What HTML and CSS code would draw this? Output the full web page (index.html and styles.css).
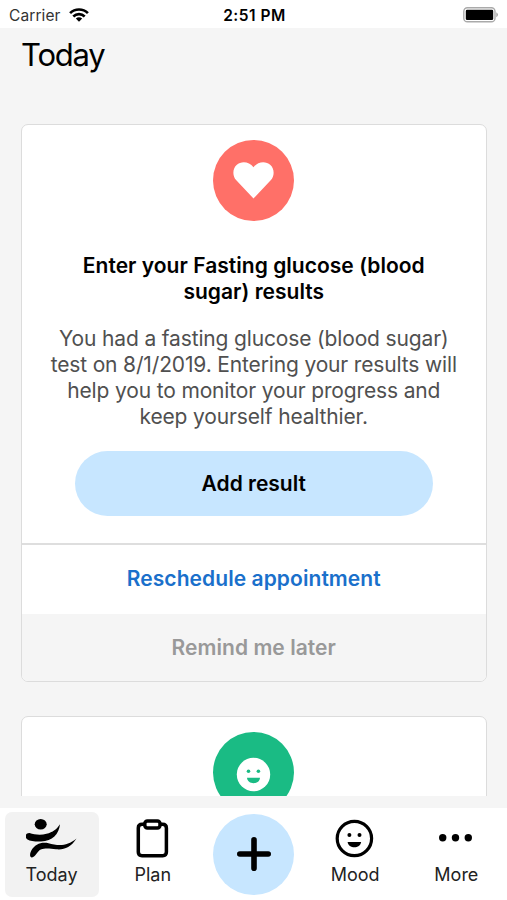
FILE: index.html
```html
<!DOCTYPE html>
<html lang="en">
<head>
<meta charset="utf-8">
<title>Today</title>
<link rel="stylesheet" href="styles.css">
</head>
<body>
<div class="app">
  <header class="status">
    <div class="carrier"><span>Carrier</span>
      <svg width="20" height="14" viewBox="0 0 20 14"><g fill="none" stroke="#000" stroke-width="2.7"><path d="M1.1 5.1C6 .3 14 .3 18.9 5.1"/><path d="M4.3 8.4C7.6 5.3 12.4 5.3 15.7 8.4"/></g><path d="M6.8 10.5Q10 7.9 13.2 10.5L10 13.7Z"/></svg>
    </div>
    <span class="clock">2:51 PM</span>
    <svg class="battery" width="37" height="16" viewBox="0 0 37 16"><rect x=".8" y=".8" width="31.2" height="14" rx="3.6" fill="#fff" stroke="#aaa" stroke-width="1.4"/><rect x="2.8" y="2.8" width="27.4" height="10.2" rx="1.3"/><path d="M33.4 5.2Q36.4 7.7 33.4 10.2Z" fill="#999"/></svg>
  </header>
  <main class="feed">
    <h1>Today</h1>
    <section class="card">
      <div class="card-body">
        <svg class="badge" viewBox="0 0 81 81"><circle cx="40.5" cy="40.5" r="40.5" fill="#ff7068"/><path d="M40.5 58.5L23.3 40.3C19.2 35.8 19.5 28.7 23.6 25C28.3 20.9 36 21.5 40.5 27.2C45 21.5 52.7 20.9 57.4 25C61.5 28.7 61.8 35.8 57.7 40.3Z" fill="#fff"/></svg>
        <h2>Enter your Fasting glucose (blood<br>sugar) results</h2>
        <p>You had a fasting glucose (blood sugar)<br>test on 8/1/2019. Entering your results will<br>help you to monitor your progress and<br>keep yourself healthier.</p>
        <button class="primary">Add result</button>
      </div>
      <button class="link">Reschedule appointment</button>
      <button class="later">Remind me later</button>
    </section>
    <section class="card next">
      <svg class="badge" viewBox="0 0 81 81"><circle cx="40.5" cy="40.5" r="40.5" fill="#1abb84"/><circle cx="40.5" cy="42.5" r="16.7" fill="#fff"/><g fill="#1abb84"><circle cx="35.5" cy="39.2" r="1.8"/><circle cx="45.4" cy="39.2" r="1.8"/><path d="M34 45.8H47C46.6 53 34.4 53 34 45.8Z"/></g></svg>
    </section>
  </main>
  <nav class="tabs">
    <a class="tab active"><svg width="52" height="40" viewBox="0 0 52 40"><ellipse cx="14.7" cy="5.3" rx="6" ry="5.2"/><path d="M34 5.2C33 15 26.5 22 15 22.5C9 22.7 4 22 1.5 20.5C-1.7 18 -.5 13.7 3.5 14C8.5 15.6 14.5 16.4 20.5 14.8C27 13 30.5 10.5 34 5.2Z"/><path d="M50.5 19.6C44.5 29 38 31 30 30.3C24 29.6 19.5 28.6 14.8 30.6C11 32.4 9.6 38 6 38.4C3.6 38.6 3.6 35 5.2 31.8C9 24.8 15.5 22.8 22.5 24.2C30.5 26.2 40 28.6 50.5 19.6Z"/></svg><span>Today</span></a>
    <a class="tab"><svg width="52" height="40" viewBox="0 0 52 40"><g fill="none" stroke="#000" stroke-width="3.5"><path d="M18 5.2H15.2Q11.3 5.2 11.3 9V33Q11.3 36.7 15 36.7H35.7Q39.4 36.7 39.4 33V9Q39.4 5.2 35.5 5.2H33"/><rect x="17.8" y="1.9" width="15.2" height="7" rx="2.6"/></g></svg><span>Plan</span></a>
    <a class="add"><svg width="34" height="34" viewBox="0 0 34 34"><path d="M17 2.8V31.2M2.8 17H31.2" stroke="#000" stroke-width="5.6" stroke-linecap="round"/></svg></a>
    <a class="tab"><svg width="52" height="40" viewBox="0 0 52 40"><circle cx="25.4" cy="19.5" r="17.2" fill="none" stroke="#000" stroke-width="3.2"/><circle cx="20.4" cy="16.1" r="2"/><circle cx="30.5" cy="16.1" r="2"/><path d="M18.6 22.9H32.1C31.4 30 19.3 30 18.6 22.9Z"/></svg><span>Mood</span></a>
    <a class="tab"><svg width="52" height="40" viewBox="0 0 52 40"><circle cx="12.7" cy="18.7" r="3.7"/><circle cx="25.5" cy="18.7" r="3.7"/><circle cx="38.3" cy="18.7" r="3.7"/></svg><span>More</span></a>
  </nav>
</div>
</body>
</html>
```
FILE: styles.css
```css
* { box-sizing: border-box; }
body { margin: 0; font-family: Inter, sans-serif; background: #fff; color: #000; }
svg { display: block; }
button { border: 0; padding: 0; margin: 0; background: none; font: inherit; color: inherit; display: flex; align-items: center; justify-content: center; }
.app { width: 507px; height: 900px; display: flex; flex-direction: column; overflow: hidden; }
.status { height: 28px; flex: none; display: grid; grid-template-columns: 1fr auto 1fr; align-items: center; padding: 2px 7px 0 9px; font-size: 15.5px; }
.carrier { display: flex; align-items: center; gap: 8px; color: #333; letter-spacing: 0.1px; }
.clock { font-weight: 600; font-size: 15.5px; letter-spacing: 0.5px; }
.battery { justify-self: end; }
.feed { height: 767.5px; flex: none; overflow: hidden; background: #f5f5f5; padding: 0 20.5px 0 21px; }
h1 { margin: 0; height: 96px; padding-top: 8px; font-weight: 400; font-size: 31px; line-height: 38px; letter-spacing: -1.2px; }
.card { border: 1.5px solid #dcdcdc; border-radius: 7px; background: #fff; overflow: hidden; height: 558px; display: flex; flex-direction: column; }
.card-body { height: 418px; flex: none; display: flex; flex-direction: column; align-items: center; padding-top: 15px; }
.badge { width: 81px; height: 81px; flex: none; margin-right: 1px; }
h2 { margin: 32px 0 0; font-size: 21px; line-height: 25.7px; font-weight: 600; text-align: center; white-space: nowrap; letter-spacing: 0.03px; }
p { margin: 22px 0 0; font-size: 21px; line-height: 25.7px; color: #505050; text-align: center; white-space: nowrap; letter-spacing: -0.15px; }
.primary { width: 358px; height: 65px; margin-top: 22px; flex: none; border-radius: 33px; background: #c7e6ff; font-size: 21px; font-weight: 600; }
.link { height: 71px; flex: none; border-top: 2px solid #dedede; color: #1a70cb; font-size: 21px; font-weight: 600; padding-bottom: 2px; letter-spacing: 0.07px; }
.later { flex: 1; background: #f5f5f5; color: #999; font-size: 21px; font-weight: 600; padding-bottom: 1px; letter-spacing: 0.05px; }
.next { margin-top: 34px; align-items: center; padding-top: 15px; }
.tabs { flex: 1; border-top: 12.5px solid #f5f5f5; background: #fff; display: grid; grid-template-columns: repeat(5, 101.2px); justify-items: center; padding: 4px 0 0 1px; }
.tab { width: 94px; height: 85px; border-radius: 7px; display: flex; flex-direction: column; align-items: center; padding-top: 7px; font-size: 18px; line-height: 24px; color: #222; }
.tab svg { margin-bottom: 4px; }
.active { background: #f2f2f2; }
.add { width: 81px; height: 81px; margin-top: 2px; border-radius: 50%; background: #c7e6ff; display: flex; align-items: center; justify-content: center; }
```
